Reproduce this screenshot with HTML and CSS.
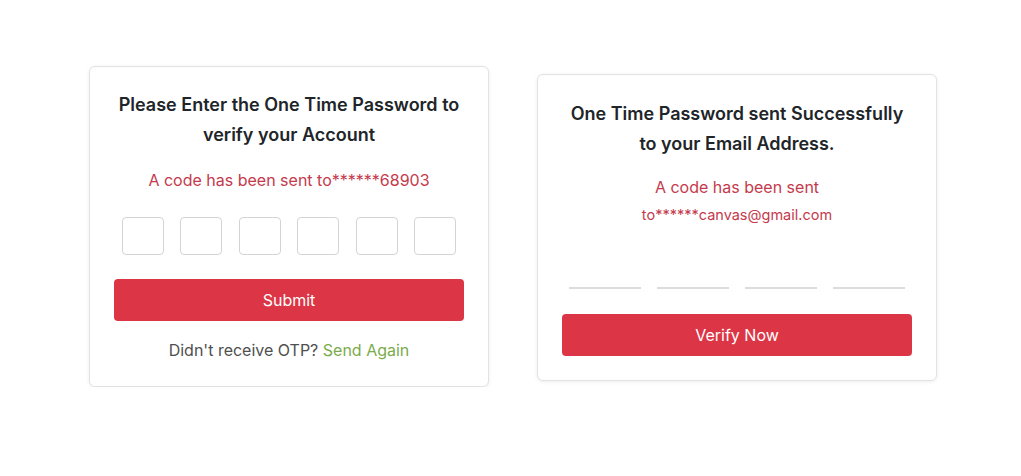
FILE: index.html
```html
<!DOCTYPE html>
<html lang="en">
<head>
<meta charset="utf-8">
<title>OTP</title>
<link rel="stylesheet" href="styles.css">
</head>
<body>
<main class="page">
  <section class="card card-otp">
    <h2 class="title">Please Enter the One Time Password to verify your Account</h2>
    <p class="sent">A code has been sent to******68903</p>
    <div class="boxes">
      <input class="box" type="text" maxlength="1">
      <input class="box" type="text" maxlength="1">
      <input class="box" type="text" maxlength="1">
      <input class="box" type="text" maxlength="1">
      <input class="box" type="text" maxlength="1">
      <input class="box" type="text" maxlength="1">
    </div>
    <button class="btn btn-submit" type="button">Submit</button>
    <p class="resend">Didn't receive OTP? <a class="resend-link" href="#">Send Again</a></p>
  </section>

  <section class="card card-email">
    <h2 class="title">One Time Password sent Successfully to your Email Address.</h2>
    <p class="sent sent-email">A code has been sent<br><span class="email">to******canvas@gmail.com</span></p>
    <div class="lines">
      <input class="line" type="text" maxlength="1">
      <input class="line" type="text" maxlength="1">
      <input class="line" type="text" maxlength="1">
      <input class="line" type="text" maxlength="1">
    </div>
    <button class="btn btn-verify" type="button">Verify Now</button>
  </section>
</main>
</body>
</html>
```

FILE: styles.css
```css
* { box-sizing: border-box; }

html, body {
  margin: 0;
  padding: 0;
  background: #ffffff;
  font-family: Inter, "Noto Sans", "Liberation Sans", sans-serif;
  color: #212529;
}

.page {
  display: flex;
  justify-content: center;
  align-items: flex-start;
  gap: 48px;
  padding: 66px 0 0 5px;
}

.card {
  width: 400px;
  background: #fff;
  border: 1px solid #e2e2e2;
  border-radius: 6px;
  box-shadow: 0 1px 4px rgba(0, 0, 0, 0.07);
  display: flex;
  flex-direction: column;
  align-items: stretch;
  text-align: center;
}

.card-otp { padding: 23px 24px 24px; }
.card-email { padding: 24px 24px 24px; margin-top: 8px; }

.title {
  margin: 0;
  font-size: 18px;
  font-weight: 600;
  line-height: 30px;
  color: #212529;
}

.card-otp .title { padding: 0 4px; }
.card-email .title { padding: 0 8px; }

.sent {
  margin: 18px 0 0;
  font-size: 16px;
  line-height: 24px;
  color: #c43a4d;
}

.sent-email {
  margin-top: 15px;
  font-size: 16px;
  line-height: 27px;
}

.email { font-size: 14.5px; }

.boxes {
  display: flex;
  justify-content: center;
  gap: 16.4px;
  margin-top: 25px;
}

.box {
  width: 42px;
  height: 38px;
  border: 1px solid #d4d4d4;
  border-radius: 4px;
  background: #fff;
  padding: 0;
  margin: 0;
  outline: none;
}

.lines {
  display: flex;
  justify-content: center;
  gap: 16px;
  margin-top: 23px;
}

.line {
  width: 72px;
  height: 38px;
  border: none;
  border-bottom: 2px solid #dcdcdc;
  background: transparent;
  padding: 0;
  margin: 0;
  outline: none;
}

.btn {
  display: block;
  width: 100%;
  height: 42px;
  border: none;
  border-radius: 4px;
  background: #dc3545;
  color: #fff;
  font-family: inherit;
  font-size: 16px;
  line-height: 42px;
  padding: 0;
  cursor: pointer;
}

.btn-submit { margin-top: 24px; }
.btn-verify { margin-top: 25px; }

.resend {
  margin: 17px 0 0;
  font-size: 16px;
  line-height: 24px;
  color: #4f4f4f;
}

.resend-link {
  color: #7bab4b;
  text-decoration: none;
}
```
